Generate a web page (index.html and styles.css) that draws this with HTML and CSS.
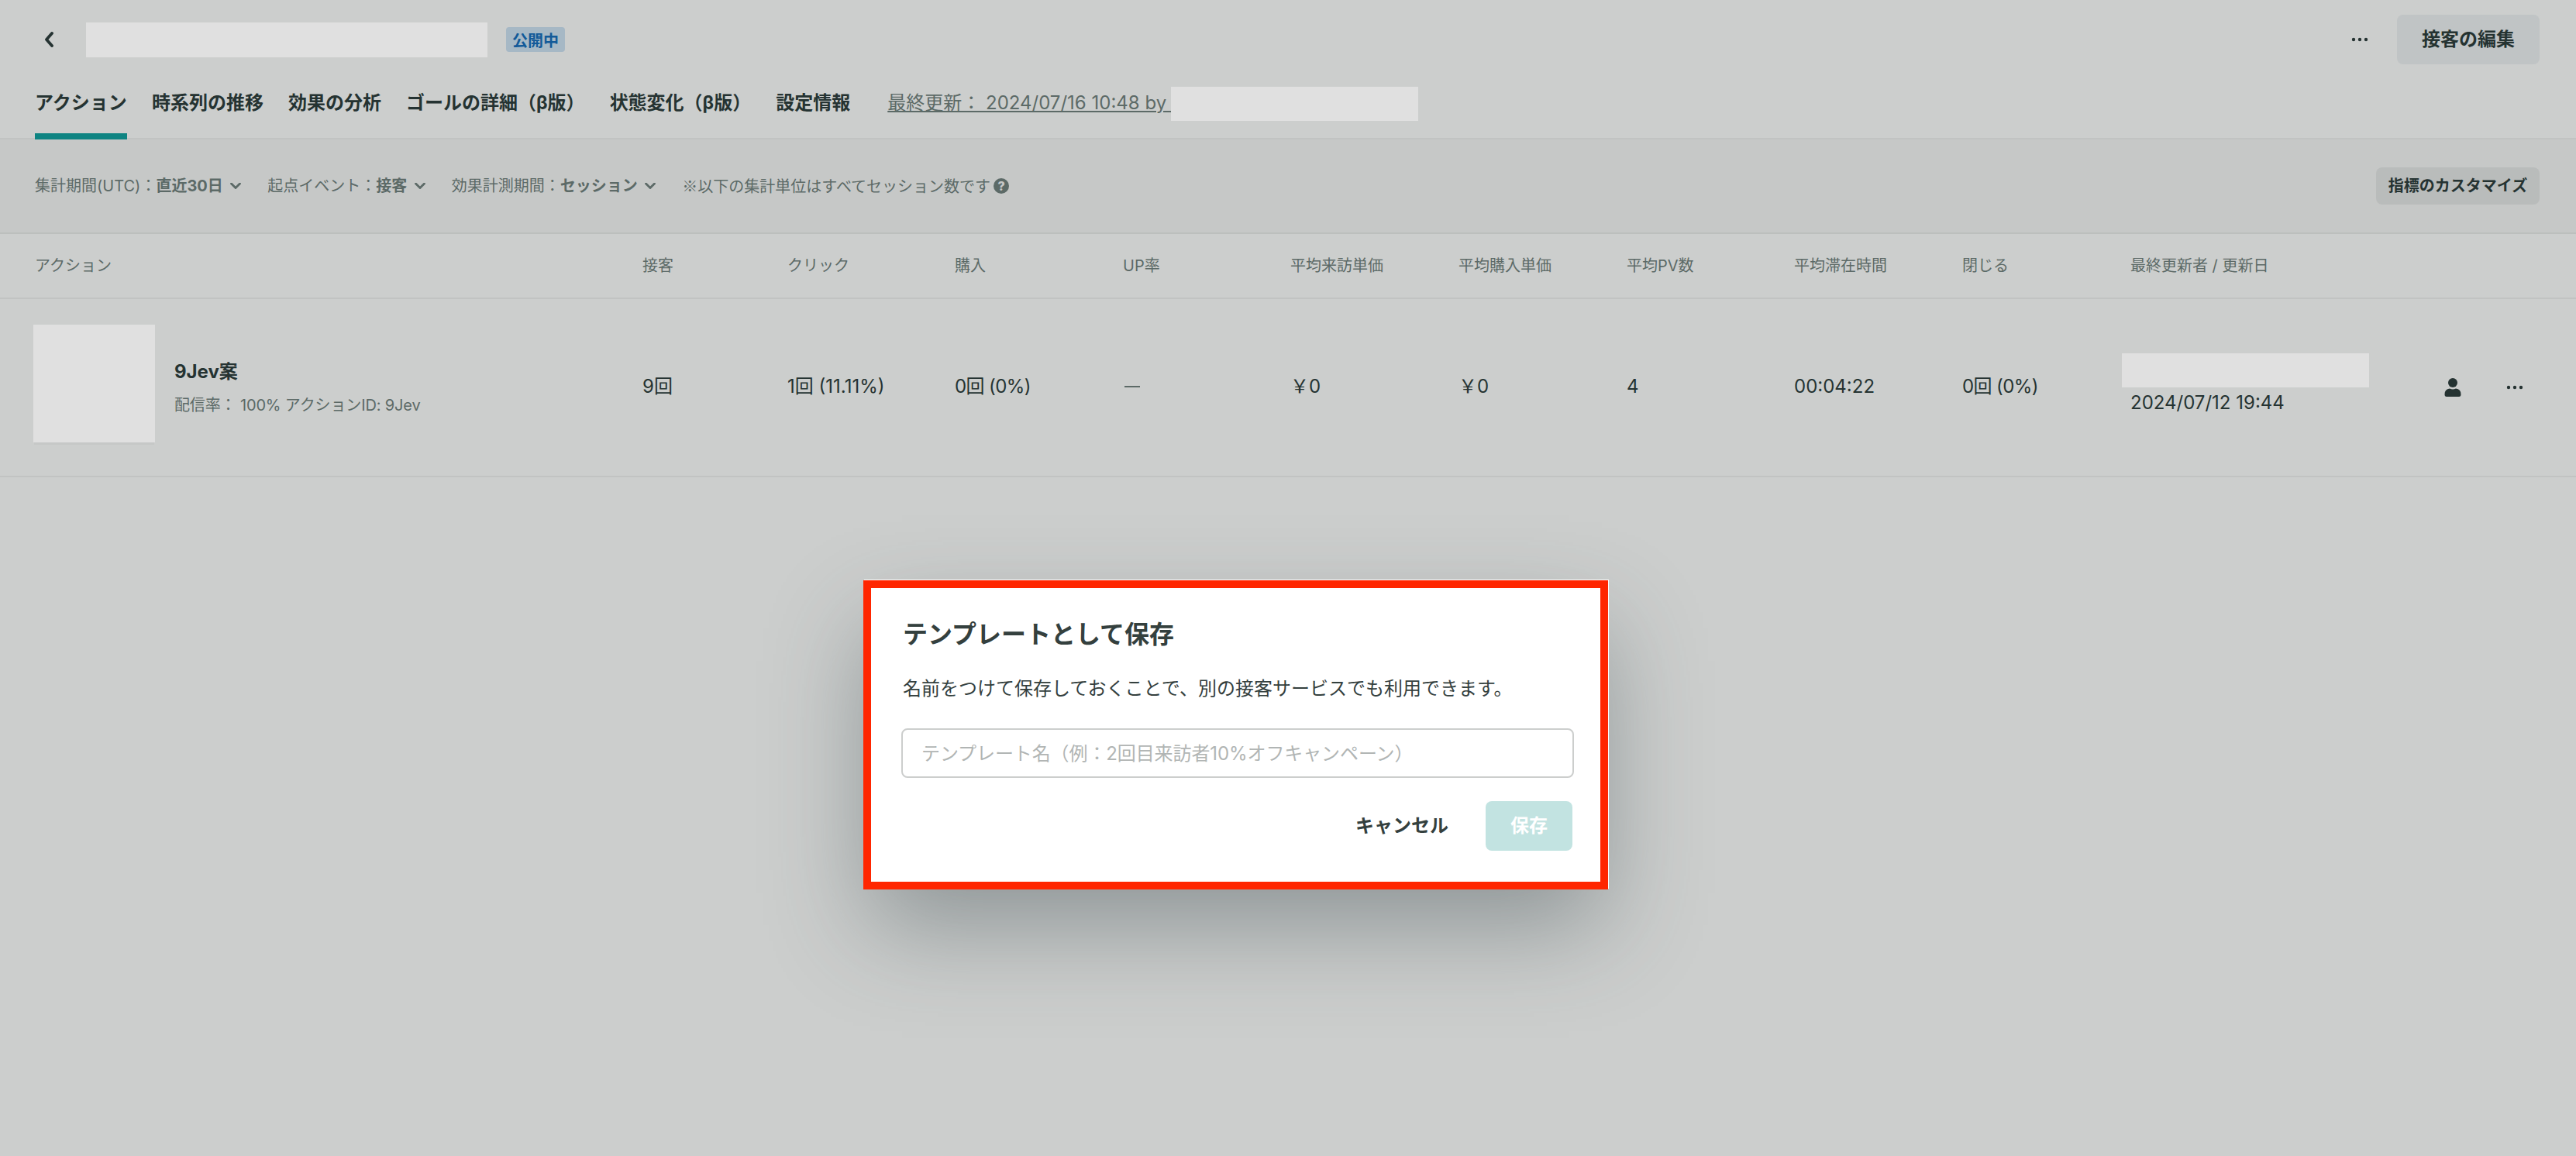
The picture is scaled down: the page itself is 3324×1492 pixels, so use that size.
FILE: index.html
```
<!DOCTYPE html>
<html lang="ja">
<head>
    <meta charset="UTF-8">
    <meta name="viewport" content="width=device-width, initial-scale=1.0">
    <title>接客 - アクション</title>
    <link rel="stylesheet" href="styles.css">
</head>
<body>
    <header class="page-header">
        <div class="title-row">
            <svg class="back" viewBox="0 0 12 20"><path d="M10 2 L3 10 L10 18"/></svg>
            <div class="mask mask-title"></div>
            <span class="badge">公開中</span>
            <svg class="dots" viewBox="0 0 22 6"><circle cx="3" cy="3" r="2.2"/><circle cx="11" cy="3" r="2.2"/><circle cx="19" cy="3" r="2.2"/></svg>
            <button class="btn btn-edit">接客の編集</button>
        </div>
        <nav class="tabs">
            <a class="tab active">アクション</a>
            <a class="tab">時系列の推移</a>
            <a class="tab">効果の分析</a>
            <a class="tab">ゴールの詳細（β版）</a>
            <a class="tab">状態変化（β版）</a>
            <a class="tab">設定情報</a>
            <a class="updated">最終更新： 2024/07/16 10:48 by&nbsp;</a>
            <div class="mask mask-user"></div>
        </nav>
    </header>

    <section class="filters">
        <div class="filter">集計期間(UTC)：<b>直近30日</b><svg class="chevron" viewBox="0 0 14 8"><path d="M1.5 1 L7 6.5 L12.5 1"/></svg></div>
        <div class="filter">起点イベント：<b>接客</b><svg class="chevron" viewBox="0 0 14 8"><path d="M1.5 1 L7 6.5 L12.5 1"/></svg></div>
        <div class="filter">効果計測期間：<b>セッション</b><svg class="chevron" viewBox="0 0 14 8"><path d="M1.5 1 L7 6.5 L12.5 1"/></svg></div>
        <div class="filter note">※以下の集計単位はすべてセッション数です<span class="help">?</span></div>
        <button class="btn btn-custom">指標のカスタマイズ</button>
    </section>

    <section class="table">
        <div class="row head">
            <div>アクション</div>
            <div>接客</div>
            <div>クリック</div>
            <div>購入</div>
            <div>UP率</div>
            <div>平均来訪単価</div>
            <div>平均購入単価</div>
            <div>平均PV数</div>
            <div>平均滞在時間</div>
            <div>閉じる</div>
            <div>最終更新者 / 更新日</div>
        </div>
        <div class="row item">
            <div class="action">
                <div class="mask thumb"></div>
                <div class="action-text">
                    <div class="action-name">9Jev案</div>
                    <div class="action-info">配信率： 100% アクションID: 9Jev</div>
                </div>
            </div>
            <div>9回</div>
            <div>1回 (11.11%)</div>
            <div class="rate">0回 (0%)</div>
            <div><span class="dash"></span></div>
            <div>￥0</div>
            <div>￥0</div>
            <div>4</div>
            <div>00:04:22</div>
            <div class="rate">0回 (0%)</div>
            <div class="editor">
                <div class="mask mask-editor"></div>
                2024/07/12 19:44
            </div>
            <div class="tools">
                <svg class="person" viewBox="0 0 22 24"><circle cx="11" cy="6" r="6"/><path d="M7 13.5 Q11 15.5 15 13.5 Q21.5 14 21.5 21 Q21.5 24 19 24 H3 Q0.5 24 0.5 21 Q0.5 14 7 13.5 Z"/></svg>
                <svg class="dots" viewBox="0 0 22 6"><circle cx="3" cy="3" r="2.2"/><circle cx="11" cy="3" r="2.2"/><circle cx="19" cy="3" r="2.2"/></svg>
            </div>
        </div>
    </section>

    <div class="modal">
        <h2>テンプレートとして保存</h2>
        <p>名前をつけて保存しておくことで、別の接客サービスでも利用できます。</p>
        <input type="text" placeholder="テンプレート名（例：2回目来訪者10%オフキャンペーン）">
        <div class="modal-actions">
            <button class="btn btn-cancel">キャンセル</button>
            <button class="btn btn-save">保存</button>
        </div>
    </div>
</body>
</html>
```
FILE: styles.css
```
* {
    box-sizing: border-box;
}

body {
    margin: 0;
    height: 1492px;
    overflow: hidden;
    background-color: #cccecd;
    color: #253332;
    font-family: Inter, "Noto Sans CJK JP", sans-serif;
    font-size: 24px;
    line-height: 1;
    white-space: nowrap;
}

svg {
    flex: none;
    fill: currentColor;
}

.mask {
    flex: none;
    background-color: #e0e0e0;
}

.btn {
    border: none;
    border-radius: 8px;
    padding: 0;
    color: #253332;
    font-family: inherit;
    font-size: 24px;
    font-weight: bold;
    line-height: 1;
}

/* header */
.page-header {
    height: 180px;
    padding: 0 47px 0 45px;
    border-bottom: 2px solid #c1c3c2;
}

.title-row {
    display: flex;
    align-items: center;
    height: 102px;
}

.back {
    width: 12px;
    height: 20px;
    margin: 0 42px 0 12px;
    fill: none;
    stroke: #253332;
    stroke-width: 3.8;
    stroke-linecap: round;
    stroke-linejoin: round;
}

.mask-title {
    width: 518px;
    height: 45px;
}

.badge {
    margin-left: 24px;
    width: 76px;
    height: 32px;
    border-radius: 4px;
    background-color: #a6b8c5;
    color: #125a99;
    font-size: 20px;
    font-weight: bold;
    line-height: 36px;
    text-align: center;
}

.dots {
    width: 22px;
    height: 6px;
}

.title-row .dots {
    margin-left: auto;
}

.btn-edit {
    width: 184px;
    height: 64px;
    margin-left: 37px;
    background-color: #c0c4c5;
}

.tabs {
    display: flex;
    gap: 32px;
    height: 78px;
}

.tab {
    height: 78px;
    padding-top: 19px;
    font-weight: bold;
}

.tab.active {
    width: 119px;
    border-bottom: 8px solid #0e8482;
}

.updated {
    margin: 19px -33px 0 16px;
    color: #5c6a67;
    text-decoration: underline;
    text-decoration-thickness: 2px;
    text-underline-offset: 2px;
}

.mask-user {
    width: 319px;
    height: 44px;
    margin-top: 10px;
}

/* filters */
.filters {
    display: flex;
    align-items: center;
    height: 122px;
    padding: 0 47px 0 45px;
    border-bottom: 2px solid #bcbfbd;
    background-color: #c6c8c7;
    color: #5c6a67;
    font-size: 20px;
}

.filter {
    display: flex;
    align-items: center;
    margin-right: 34px;
}

.chevron {
    width: 14px;
    height: 8px;
    margin-left: 9.5px;
    fill: none;
    stroke: #5c6a67;
    stroke-width: 2.8;
    stroke-linecap: round;
}

.note {
    font-family: "Noto Sans CJK JP", sans-serif;
}

.help {
    width: 20px;
    height: 20px;
    margin-left: 4px;
    border-radius: 50%;
    background-color: #5c6a67;
    color: #c6c8c7;
    font-family: Inter, sans-serif;
    font-size: 16px;
    font-weight: 800;
    line-height: 20px;
    text-align: center;
}

.btn-custom {
    width: 211px;
    height: 48px;
    margin-left: auto;
    background-color: #b9bcbb;
    font-size: 20px;
}

/* table */
.row {
    display: grid;
    grid-template-columns: 784px 187px 216px 217px 216px 217px 217px 216px 217px 217px 336px 1fr;
    align-items: center;
    padding-left: 45px;
    border-bottom: 2px solid #c1c3c2;
}

.head {
    height: 84px;
    color: #5c6a67;
    font-size: 20px;
}

.item {
    height: 230px;
    padding-bottom: 2px;
}

.rate {
    letter-spacing: -0.6px;
}

.action {
    display: flex;
    align-items: center;
    margin-left: -2px;
}

.thumb {
    width: 157px;
    height: 152px;
    margin-bottom: 8px;
    box-shadow: 0 4px 0 -1px #c6c8c7;
}

.action-text {
    margin: 2px 0 0 25px;
}

.action-name {
    font-weight: bold;
}

.action-info {
    margin-top: 21px;
    color: #5c6a67;
    font-size: 20px;
    letter-spacing: -0.14px;
}

.dash {
    display: block;
    width: 20px;
    height: 2px;
    margin-left: 2px;
    background-color: #5c6a67;
}

.editor {
    padding-bottom: 10px;
}

.mask-editor {
    width: 319px;
    height: 44px;
    margin: 0 0 8px -11px;
}

.tools {
    display: flex;
    align-items: center;
    padding: 2px 0 0 69px;
}

.person {
    width: 22px;
    height: 24px;
    margin-right: 58px;
}

/* dialog */
.modal {
    position: absolute;
    top: 749px;
    left: 1114px;
    width: 961px;
    height: 399px;
    padding: 44px 34px 0 39px;
    border: 10px solid #ff2600;
    background-color: #fff;
    color: #34403e;
    box-shadow: 1px -1px 0 #fff, 0 54px 120px -8px rgba(55, 70, 74, 0.42);
}

.modal h2 {
    margin: 0 0 42px 2px;
    font-size: 32px;
    line-height: 1;
}

.modal p {
    margin: 0 0 39px 2px;
}

.modal input {
    display: block;
    width: 868px;
    height: 64px;
    padding: 0 24px;
    border: 2px solid #cccecd;
    border-radius: 8px;
    background-color: #fff;
    font-family: inherit;
    font-size: 24px;
    letter-spacing: -0.1px;
}

.modal input::placeholder {
    color: #b1b5b4;
}

.modal-actions {
    display: flex;
    justify-content: flex-end;
    margin: 30px 2px 0 0;
}

.btn-cancel {
    width: 168px;
    margin-right: 24px;
    background: none;
    color: #34403e;
}

.btn-save {
    width: 112px;
    height: 64px;
    background-color: #c2e3e1;
    color: #fff;
}
```
